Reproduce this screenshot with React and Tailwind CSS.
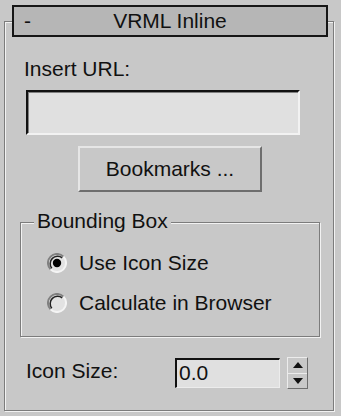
import React from "react";

function Radio({ checked }) {
  return (
    <svg width="20" height="20" viewBox="0 0 20 20" className="shrink-0">
      <circle cx="10" cy="10" r="9" fill="#e2e2e2" />
      <path d="M3.6 16.4 A9 9 0 0 1 16.4 3.6" fill="none" stroke="#808080" strokeWidth="2" />
      <path d="M4.8 15.2 A7.4 7.4 0 0 1 15.2 4.8" fill="none" stroke="#222" strokeWidth="1.5" />
      <path d="M16.4 3.6 A9 9 0 0 1 3.6 16.4" fill="none" stroke="#f4f4f4" strokeWidth="2" />
      {checked && <circle cx="10" cy="10" r="4.2" fill="#000" />}
    </svg>
  );
}

export default function App() {
  return (
    <div
      className="relative w-[341px] h-[416px] bg-[#c8c8c8] overflow-hidden text-[21px] leading-[24px] text-[#111]"
      style={{ fontFamily: '"Liberation Sans", Arial, sans-serif' }}
    >
      <div className="absolute left-[12px] top-[5px] w-[316px] h-[32px] border-2 border-[#161616] bg-[#b6b6b6] flex items-center z-10">
        <span className="absolute left-[10px] top-[2px]">-</span>
        <span className="w-full text-center">VRML Inline</span>
      </div>

      <div className="mt-[21px] ml-[4px] w-[330px] h-[390px] border border-[#7c7c7c] shadow-[inset_1px_1px_0_#f2f2f2,1px_1px_0_#f2f2f2] flex flex-col">
        <div className="mt-[35px] ml-[19px]">Insert URL:</div>

        <div className="mt-[9px] ml-[21px] w-[274px] h-[45px] bg-[#e0e0e0] border-t-2 border-l-2 border-[#111] border-r-2 border-b-2 border-r-[#f2f2f2] border-b-[#f2f2f2] shadow-[inset_1px_1px_0_#808080]" />

        <div className="mt-[11px] ml-[73px] w-[184px] h-[46px] bg-[#c8c8c8] border-2 border-t-[#e6e6e6] border-l-[#e6e6e6] border-r-[#6e6e6e] border-b-[#6e6e6e] flex items-center justify-center">
          Bookmarks ...
        </div>

        <div className="relative mt-[30px] ml-[15px] w-[300px] h-[115px] border border-[#7c7c7c] shadow-[inset_1px_1px_0_#f2f2f2,1px_1px_0_#f2f2f2] flex flex-col">
          <span className="absolute top-[-14px] left-[13px] px-[3px] bg-[#c8c8c8]">Bounding Box</span>
          <div className="mt-[28px] ml-[26px] flex items-center gap-[12px] h-[24px]">
            <Radio checked />
            <span>Use Icon Size</span>
          </div>
          <div className="mt-[16px] ml-[26px] flex items-center gap-[12px] h-[24px]">
            <Radio />
            <span>Calculate in Browser</span>
          </div>
        </div>

        <div className="mt-[20px] flex items-start">
          <span className="ml-[21px] mt-[2px] w-[149px]">Icon Size:</span>
          <div className="mt-[1px] w-[105px] h-[30px] bg-[#e0e0e0] border-t-2 border-l-2 border-[#111] border-r border-b border-r-[#ececec] border-b-[#ececec] pl-[2px] leading-[26px]">
            0.0
          </div>
          <div className="ml-[7px] w-[21px] h-[32px] bg-[#c8c8c8] border border-t-[#ececec] border-l-[#ececec] border-r-[#6e6e6e] border-b-[#6e6e6e] flex flex-col">
            <div className="flex-1 flex items-center justify-center">
              <svg width="10" height="6" viewBox="0 0 10 6"><path d="M5 0 L10 6 L0 6 Z" fill="#111" /></svg>
            </div>
            <div className="h-px bg-[#ececec]" />
            <div className="flex-1 flex items-center justify-center">
              <svg width="10" height="6" viewBox="0 0 10 6"><path d="M0 0 L10 0 L5 6 Z" fill="#111" /></svg>
            </div>
          </div>
        </div>
      </div>
    </div>
  );
}
